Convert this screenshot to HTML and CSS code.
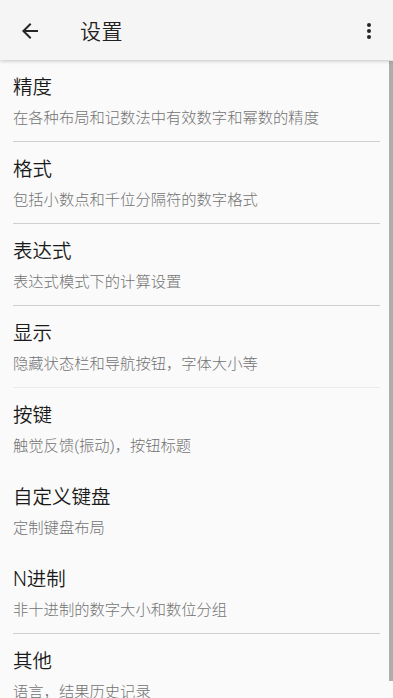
FILE: index.html
```html
<!DOCTYPE html>
<html lang="zh-CN">
<head>
    <meta charset="UTF-8">
    <meta name="viewport" content="width=device-width, initial-scale=1.0">
    <title>设置</title>
    <link rel="stylesheet" href="styles.css">
</head>
<body>
    <header class="toolbar">
        <button class="icon-btn back-btn" aria-label="返回">
            <svg viewBox="0 0 24 24" width="24" height="24">
                <path d="M20 11H7.83l5.59-5.59L12 4l-8 8 8 8 1.41-1.41L7.83 13H20v-2z"/>
            </svg>
        </button>
        <h1 class="toolbar-title">设置</h1>
        <button class="icon-btn more-btn" aria-label="更多">
            <svg viewBox="0 0 24 24" width="24" height="24">
                <circle cx="12" cy="6" r="2"/>
                <circle cx="12" cy="12" r="2"/>
                <circle cx="12" cy="18" r="2"/>
            </svg>
        </button>
    </header>

    <main class="settings">
        <div class="pref">
            <div class="pref-title">精度</div>
            <div class="pref-summary">在各种布局和记数法中有效数字和幂数的精度</div>
        </div>
        <div class="pref">
            <div class="pref-title">格式</div>
            <div class="pref-summary">包括小数点和千位分隔符的数字格式</div>
        </div>
        <div class="pref">
            <div class="pref-title">表达式</div>
            <div class="pref-summary">表达式模式下的计算设置</div>
        </div>
        <div class="pref pref-light">
            <div class="pref-title">显示</div>
            <div class="pref-summary">隐藏状态栏和导航按钮，字体大小等</div>
        </div>
        <div class="pref pref-none">
            <div class="pref-title">按键</div>
            <div class="pref-summary">触觉反馈(振动)，按钮标题</div>
        </div>
        <div class="pref pref-none">
            <div class="pref-title">自定义键盘</div>
            <div class="pref-summary">定制键盘布局</div>
        </div>
        <div class="pref">
            <div class="pref-title">N进制</div>
            <div class="pref-summary">非十进制的数字大小和数位分组</div>
        </div>
        <div class="pref">
            <div class="pref-title">其他</div>
            <div class="pref-summary">语言，结果历史记录</div>
        </div>
    </main>

    <!-- scroll indicator on the right edge -->
    <div class="scrollbar"></div>
</body>
</html>
```

FILE: styles.css
```css
html, body {
    margin: 0;
    padding: 0;
}
body {
    width: 393px;
    height: 698px;
    overflow: hidden;
    position: relative;
    background: #fafafa;
    font-family: Roboto, "Noto Sans CJK SC", sans-serif;
    color: #212121;
}
.toolbar {
    position: relative;
    z-index: 2;
    height: 60px;
    display: flex;
    align-items: center;
    background: #f5f5f5;
    box-shadow: 0 1px 4px rgba(0, 0, 0, 0.22);
}
.icon-btn {
    border: none;
    background: none;
    padding: 0;
    width: 24px;
    height: 24px;
    display: flex;
    margin-top: 2px;
}
.icon-btn svg {
    fill: #262626;
}
.back-btn {
    margin-left: 18px;
}
.toolbar-title {
    margin: 0 0 0 38px;
    flex: 1;
    font-size: 21px;
    font-weight: 350;
    color: #212121;
    letter-spacing: 0.5px;
}
.more-btn {
    margin-right: 12px;
}
.settings {
    padding: 0 13px;
}
.pref {
    padding: 16px 0 13px;
    border-bottom: 1px solid #cfcfcf;
}
.pref-light {
    border-bottom-color: #ececec;
}
.pref-none {
    border-bottom-color: transparent;
}
.pref-title {
    font-size: 19.5px;
    font-weight: 350;
    line-height: 24px;
    color: #1a1a1a;
}
.pref-summary {
    margin-top: 8px;
    font-size: 15.3px;
    font-weight: 300;
    line-height: 20px;
    color: #737373;
}
.scrollbar {
    position: absolute;
    top: 61px;
    right: 0;
    width: 4px;
    height: 620px;
    background: #adadad;
}
```
